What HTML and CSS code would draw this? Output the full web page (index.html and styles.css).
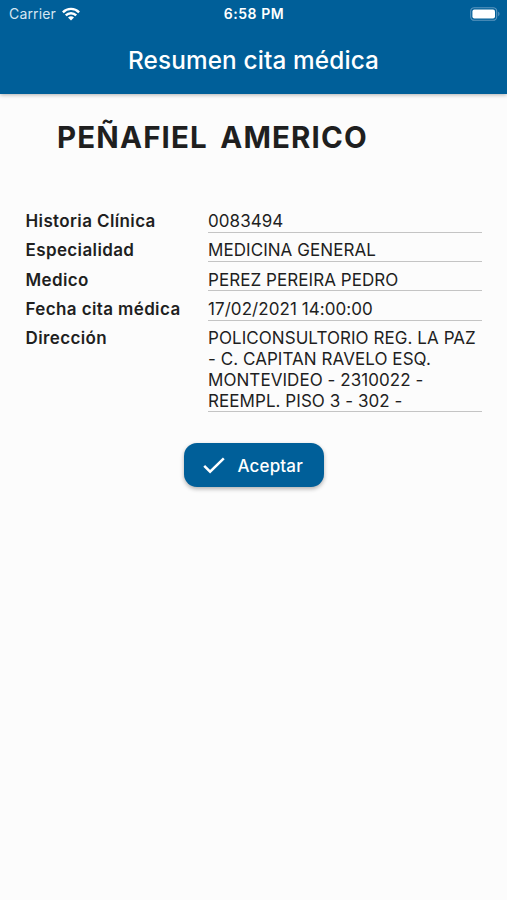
FILE: index.html
```
<!DOCTYPE html>
<html lang="es">
<head>
  <meta charset="UTF-8" />
  <meta name="viewport" content="width=device-width, initial-scale=1.0" />
  <title>Resumen cita médica</title>
  <link rel="stylesheet" href="styles.css">
</head>
<body>
  <header class="app-header">
    <div class="status-bar">
      <div class="carrier">
        <span>Carrier</span>
        <svg class="wifi" viewBox="0 0 18 14" width="18" height="14">
          <g fill="none" stroke="#ffffff" stroke-width="2.4">
            <path d="M0.9 5.3a11.4 11.4 0 0 1 16.2 0" />
            <path d="M3.8 8.4a7.3 7.3 0 0 1 10.4 0" />
          </g>
          <path d="M6 10.6a4.3 4.3 0 0 1 6 0L9 13.6z" fill="#ffffff" />
        </svg>
      </div>
      <div class="clock">6:58 PM</div>
      <svg class="battery" viewBox="0 0 31 14" width="31" height="14">
        <rect x="0.7" y="0.7" width="26" height="12.6" rx="3.6" fill="none" stroke="#5b96bf" stroke-width="1.1" />
        <rect x="2.4" y="2.4" width="22.6" height="9.2" rx="2" fill="#ffffff" />
        <path d="M28.2 4.8c1.7.6 1.7 3.8 0 4.4z" fill="#5b96bf" />
      </svg>
    </div>
    <h1 class="title">Resumen cita médica</h1>
  </header>
  <main class="content">
    <h2 class="patient">PEÑAFIEL&nbsp; AMERICO</h2>
    <dl class="details">
      <dt>Historia Clínica</dt>
      <dd>0083494</dd>
      <dt>Especialidad</dt>
      <dd>MEDICINA GENERAL</dd>
      <dt>Medico</dt>
      <dd>PEREZ PEREIRA PEDRO</dd>
      <dt>Fecha cita médica</dt>
      <dd>17/02/2021 14:00:00</dd>
      <dt>Dirección</dt>
      <dd>POLICONSULTORIO REG. LA PAZ<br>- C. CAPITAN RAVELO ESQ.<br>MONTEVIDEO - 2310022 -<br>REEMPL. PISO 3 - 302 -</dd>
    </dl>
    <button class="accept">
      <svg viewBox="0 0 22 17" width="22" height="17">
        <path d="M1.2 8.8l5.9 5.9L20.8 1.3" fill="none" stroke="#ffffff" stroke-width="2.5" />
      </svg>
      <span>Aceptar</span>
    </button>
  </main>
</body>
</html>
```
FILE: styles.css
```
:root {
  --primary-color: #005f99;
  --background-color: #fcfcfc;
  --text-color: #1f1f1f;
  --line-color: #c4c4c4;
}

* {
  box-sizing: border-box;
}

body {
  margin: 0;
  min-height: 100vh;
  font-family: Inter, Roboto, sans-serif;
  background-color: var(--background-color);
  color: var(--text-color);
}

.app-header {
  height: 94px;
  background-color: var(--primary-color);
  color: #ffffff;
  box-shadow: 0 1px 4px rgba(0, 0, 0, 0.3);
}

.status-bar {
  display: grid;
  grid-template-columns: 1fr auto 1fr;
  align-items: center;
  height: 27px;
  padding: 0 6px 0 9px;
}

.carrier {
  display: flex;
  align-items: center;
  gap: 6px;
  font-size: 14px;
  letter-spacing: 0.15px;
  color: #d5e6f2;
}

.clock {
  font-size: 14px;
  font-weight: 600;
  letter-spacing: 0.55px;
  margin-right: 2px;
}

.battery {
  justify-self: end;
}

.title {
  margin: 0;
  padding-top: 17px;
  font-size: 24.3px;
  line-height: 33px;
  font-weight: 500;
  letter-spacing: 0.15px;
  text-align: center;
}

.content {
  display: flex;
  flex-direction: column;
  padding: 23px 25px 0;
}

.patient {
  margin: 0 0 54px 32px;
  font-size: 29.5px;
  line-height: 40px;
  font-weight: 650;
  letter-spacing: 1.15px;
  word-spacing: -2px;
}

.details {
  display: grid;
  grid-template-columns: 183px 274px;
  row-gap: 7.5px;
  margin: 0;
  font-size: 17px;
  line-height: 20.8px;
}

.details dt {
  padding-left: 0.5px;
  font-weight: 600;
  letter-spacing: 0.38px;
}

.details dd {
  margin: 0;
  border-bottom: 1px solid var(--line-color);
  letter-spacing: 0.06px;
  white-space: nowrap;
}

.accept {
  display: flex;
  align-items: center;
  align-self: center;
  gap: 13px;
  width: 140px;
  height: 44px;
  margin-top: 31px;
  padding: 1px 0 0 19px;
  border: none;
  border-radius: 13px;
  background-color: var(--primary-color);
  color: #ffffff;
  font-family: inherit;
  font-size: 17px;
  font-weight: 500;
  letter-spacing: 0.15px;
  box-shadow: 0 2px 4px rgba(0, 0, 0, 0.3);
}
```
